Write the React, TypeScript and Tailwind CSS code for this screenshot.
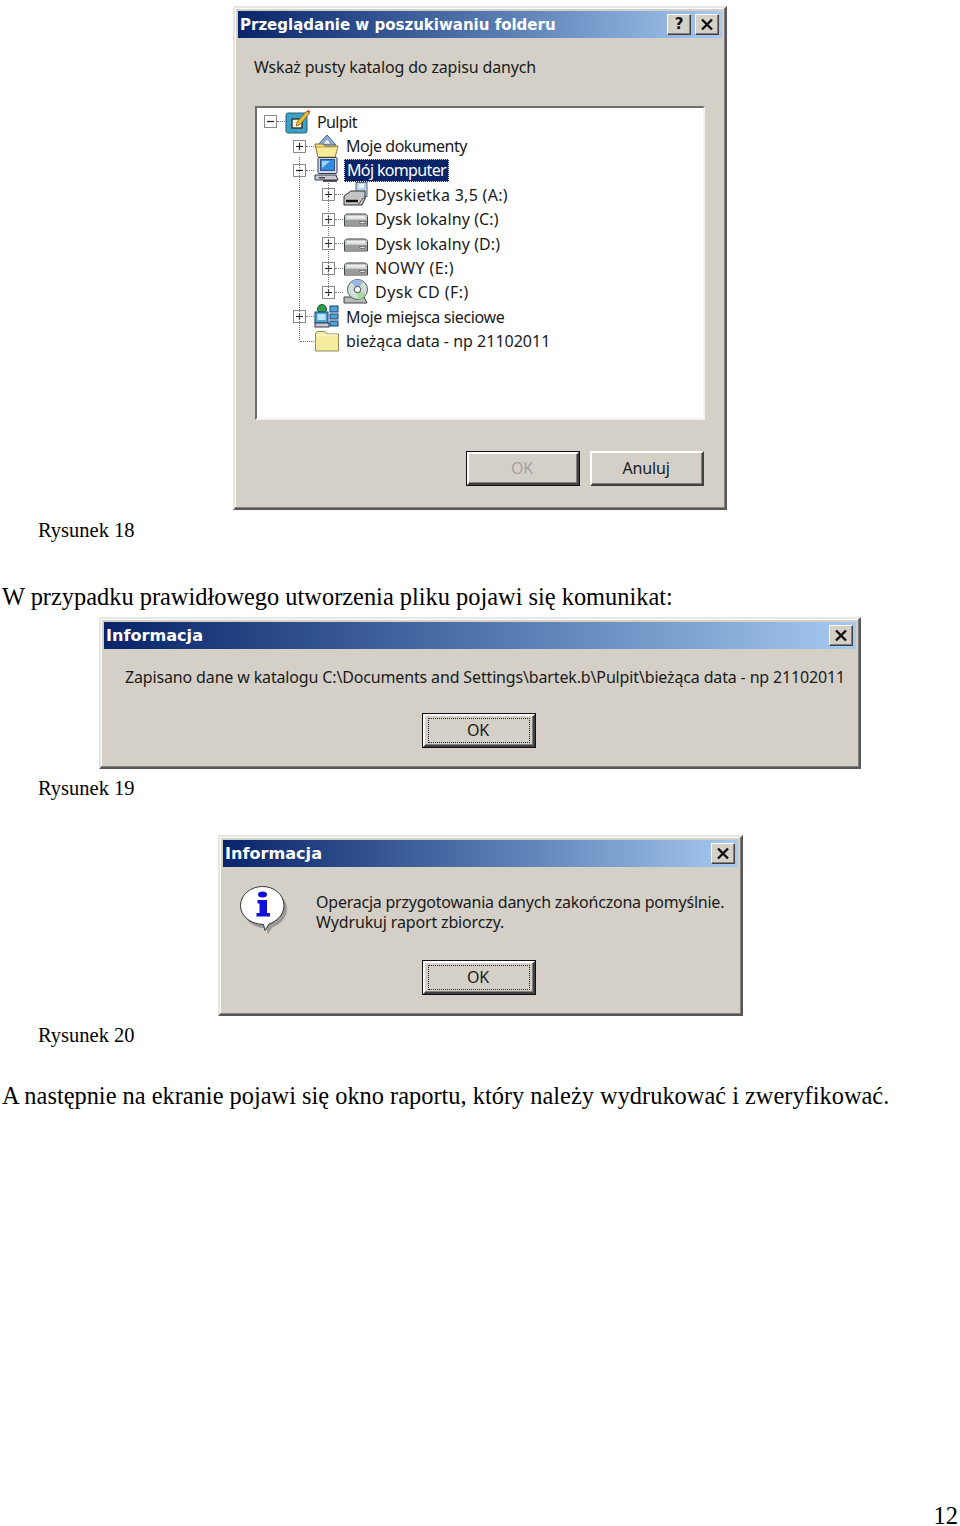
import type { ReactNode } from "react";

const uiBase = "font-['Noto_Sans',sans-serif] text-[16px] text-[#1a1a1a]";
const ui = `${uiBase} tracking-[-0.15px]`;
const serif = "font-['Liberation_Serif',serif] text-black";

function TitleButton({ label }: { label: string }) {
  return (
    <div className="flex h-[21px] w-[24px] items-center justify-center border border-t-white border-l-white border-r-[#404040] border-b-[#404040] bg-[#d4d0c8] shadow-[inset_-1px_-1px_0_#808080]">
      {label === "x" ? (
        <svg width="14" height="13" viewBox="0 0 14 13">
          <path d="M2 1.5 12 11.5M12 1.5 2 11.5" stroke="#111" strokeWidth="2.4" fill="none" />
        </svg>
      ) : (
        <span className="font-['DejaVu_Sans',sans-serif] text-[15px] font-bold leading-none text-[#111]">?</span>
      )}
    </div>
  );
}

function Dialog({ title, help, width, height, children }: { title: string; help?: boolean; width: string; height: string; children: ReactNode }) {
  return (
    <div className={`${width} ${height} flex flex-col border-2 border-t-[#e8e6e1] border-l-[#e8e6e1] border-r-[#585858] border-b-[#585858] bg-[#d4d0c8] p-[3px] shadow-[inset_-1px_-1px_0_#808080,inset_1px_1px_0_#fff]`}>
      <div className="flex h-[27px] shrink-0 items-center justify-between bg-gradient-to-r from-[#0a246a] to-[#a6caf0] pl-[2px] pr-[3px]">
        <span className={`pt-[1px] font-['DejaVu_Sans',sans-serif] font-bold text-white ${help ? "text-[15px]" : "text-[16.1px]"}`}>{title}</span>
        <div className="flex gap-[4px]">
          {help && <TitleButton label="?" />}
          <TitleButton label="x" />
        </div>
      </div>
      {children}
    </div>
  );
}

function WinButton({ label, isDefault, focused, disabled }: { label: string; isDefault?: boolean; focused?: boolean; disabled?: boolean }) {
  const bevel = "flex items-center justify-center border-2 border-t-white border-l-white border-r-[#404040] border-b-[#404040] shadow-[inset_-1px_-1px_0_#808080]";
  const face = (
    <div className={`flex h-[25px] w-[102px] items-center justify-center pb-[2px] pr-[2px] ${focused ? "border border-dotted border-[#222]" : ""}`}>
      <span className={`${ui} ${disabled ? "text-[#a5a29b]" : ""}`}>{label}</span>
    </div>
  );
  if (isDefault) {
    return (
      <div className="flex h-[35px] w-[114px] border border-[#111]">
        <div className={`${bevel} w-full`}>{face}</div>
      </div>
    );
  }
  return <div className={`${bevel} h-[35px] w-[114px]`}>{face}</div>;
}

function Expander({ open }: { open: boolean }) {
  return (
    <svg width="13" height="13" viewBox="0 0 13 13" className="shrink-0">
      <rect x="0.5" y="0.5" width="12" height="12" fill="#fff" stroke="#8a8a8a" />
      <path d={open ? "M3 6.5h7" : "M3 6.5h7M6.5 3v7"} stroke="#222" strokeWidth="1.2" />
    </svg>
  );
}

function DesktopIcon() {
  return (
    <svg width="26" height="26" viewBox="0 0 26 26">
      <rect x="1" y="4" width="21" height="20" rx="2" fill="#3f9fc4" stroke="#25607f" />
      <rect x="7" y="10" width="10" height="9" fill="#f5f1d8" stroke="#333" strokeWidth="1.4" />
      <path d="M12 13 22 2l2.5 2-9 11-4 2z" fill="#f0c030" stroke="#7a5c10" strokeWidth="0.8" />
      <path d="M22 2l2.5 2 1-1.5L23 1z" fill="#d84030" />
    </svg>
  );
}

function DocsIcon() {
  return (
    <svg width="26" height="26" viewBox="0 0 26 26">
      <path d="M4 12 13 2l9 10z" fill="#8fb0d8" stroke="#40608a" />
      <path d="M9 11l4-5 4 5z" fill="#fff" stroke="#6a82a0" strokeWidth="0.7" />
      <path d="M1 11h8l2 2h13l-3 11H4z" fill="#f4dc78" stroke="#8a7430" />
      <path d="M2 14h19l3-1-3 11H4z" fill="#f9ea9a" stroke="#8a7430" strokeWidth="0.6" />
    </svg>
  );
}

function ComputerIcon() {
  return (
    <svg width="26" height="26" viewBox="0 0 26 26">
      <rect x="4" y="0.5" width="19" height="16" rx="1" fill="#d8d8e8" stroke="#333a50" />
      <rect x="6.5" y="2.5" width="14" height="11" fill="#2f8ae0" stroke="#1c3a70" strokeWidth="0.8" />
      <path d="M8 4h8l-8 7z" fill="#9fd4f8" />
      <path d="M1 18h21l2 5H1z" fill="#c8c8d0" stroke="#333a50" />
      <path d="M9 24h14" stroke="#222" strokeWidth="1.5" />
      <rect x="5" y="20" width="6" height="1.5" fill="#444" />
    </svg>
  );
}

function FloppyIcon() {
  return (
    <svg width="26" height="26" viewBox="0 0 26 26">
      <rect x="13" y="0.5" width="11" height="14" fill="#b8d4e4" stroke="#5a6a78" />
      <rect x="16" y="2" width="5" height="4" fill="#eef4f8" />
      <path d="M1 14 8 9h14v8l-3 6H1z" fill="#c4c4c4" stroke="#333" />
      <path d="M3 19h12" stroke="#111" strokeWidth="2.4" />
      <path d="M15 23l5-7h3" fill="none" stroke="#555" />
    </svg>
  );
}

function DriveIcon() {
  return (
    <svg width="26" height="26" viewBox="0 0 26 26">
      <path d="M5 8h16c2 0 3.5 1 3.5 2.5V20H1.500v-9.500C1.500 9 3 8 5 8z" fill="#c8cac8" stroke="#444" />
      <path d="M2 14h22v5.500H2z" fill="#9a9c9c" />
      <rect x="4" y="10" width="18" height="2.500" fill="#eceeee" />
      <rect x="17" y="15.500" width="5" height="2" fill="#e8f0e8" stroke="#333" strokeWidth="0.5" />
    </svg>
  );
}

function CdIcon() {
  return (
    <svg width="26" height="26" viewBox="0 0 26 26">
      <path d="M1 18h20l3 6H1z" fill="#b8bcb8" stroke="#444" />
      <circle cx="14.500" cy="10.500" r="10" fill="#cfe0d8" stroke="#4a5a5a" />
      <path d="M14.500 10.500 8 3a10 10 0 0 1 12-.5z" fill="#9ab8e8" />
      <path d="M14.500 10.500 23 15a10 10 0 0 1-8 5.500z" fill="#a8d8a0" />
      <circle cx="14.500" cy="10.500" r="3.200" fill="#fff" stroke="#444" />
    </svg>
  );
}

function NetworkIcon() {
  return (
    <svg width="26" height="26" viewBox="0 0 26 26">
      <circle cx="8" cy="5" r="4.500" fill="#2f9a50" stroke="#1c5a30" />
      <rect x="1" y="8" width="13" height="11" fill="#4aa8d8" stroke="#1c3a70" />
      <rect x="3.500" y="10" width="8" height="6" fill="#bfe8f8" />
      <rect x="1" y="19" width="14" height="4" fill="#c8c8d0" stroke="#333a50" />
      <rect x="16" y="2" width="8" height="6" fill="#4aa8d8" stroke="#1c3a70" />
      <rect x="16" y="10" width="8" height="5" fill="#4aa8d8" stroke="#1c3a70" />
      <rect x="16" y="17" width="8" height="5" fill="#4aa8d8" stroke="#1c3a70" />
    </svg>
  );
}

function FolderIcon() {
  return (
    <svg width="26" height="26" viewBox="0 0 26 26">
      <path d="M1.500 6 3 3.500h8L13 6h11.500v17H1.500z" fill="#f6ec9e" stroke="#8f8a58" />
      <path d="M2.500 7h21" stroke="#fffbd8" />
    </svg>
  );
}

function InfoIcon() {
  return (
    <svg width="50" height="50" viewBox="0 0 50 50">
      <path d="M25 5c12.500 0 23 8 23 19 0 9-7 16-15 18.500l-4 7-2-6.500C13 43 4 34 4 24 4 13 13 5 25 5z" fill="#9a9a9a" />
      <path d="M23.500 1.500C35 1.500 45 9.500 45 20.500c0 9.500-7.500 16-15 18.500l-4 6.500-1.500-6C11 39 1.500 31 1.500 20.500 1.500 9.500 12 1.500 23.500 1.500z" fill="#fff" stroke="#333" />
      <ellipse cx="23.500" cy="9.500" rx="4.500" ry="3" fill="#1010d8" />
      <path d="M18.500 15h9.500v13h3v3.500H17.500V28h3V18.500h-2z" fill="#1010d8" />
    </svg>
  );
}

type TreeRow = { level: number; open: boolean | null; icon: ReactNode; label: string; track: string; selected?: boolean };

const rows: TreeRow[] = [
  { level: 0, open: true, icon: <DesktopIcon />, label: "Pulpit", track: "tracking-[-0.6px]" },
  { level: 1, open: false, icon: <DocsIcon />, label: "Moje dokumenty", track: "tracking-[-0.45px]" },
  { level: 1, open: true, icon: <ComputerIcon />, label: "Mój komputer", track: "tracking-[-0.65px]", selected: true },
  { level: 2, open: false, icon: <FloppyIcon />, label: "Dyskietka 3,5 (A:)", track: "tracking-[0.3px]" },
  { level: 2, open: false, icon: <DriveIcon />, label: "Dysk lokalny (C:)", track: "tracking-[0.1px]" },
  { level: 2, open: false, icon: <DriveIcon />, label: "Dysk lokalny (D:)", track: "tracking-[0.1px]" },
  { level: 2, open: false, icon: <DriveIcon />, label: "NOWY (E:)", track: "tracking-[0.4px]" },
  { level: 2, open: false, icon: <CdIcon />, label: "Dysk CD (F:)", track: "tracking-[0.45px]" },
  { level: 1, open: false, icon: <NetworkIcon />, label: "Moje miejsca sieciowe", track: "tracking-[-0.35px]" },
  { level: 1, open: null, icon: <FolderIcon />, label: "bieżąca data - np 21102011", track: "tracking-normal" },
];

const indent = ["ml-0", "ml-[29px]", "ml-[58px]"];

function Tree() {
  return (
    <div className="relative ml-[17px] mr-[17px] mt-[26px] h-[314px] border-2 border-t-[#6e6e6a] border-l-[#6e6e6a] border-r-[#f4f3f0] border-b-[#f4f3f0] bg-white pl-[7px] pt-[1.5px]">
      <div className="absolute left-[42px] top-[49px] h-[183px] border-l border-dotted border-[#777]" />
      <div className="absolute left-[71px] top-[75px] h-[111px] border-l border-dotted border-[#777]" />
      {rows.map((r) => (
        <div key={r.label} className={`flex h-[24.4px] items-center ${indent[r.level]}`}>
          {r.open === null ? (
            <div className="w-[13px] shrink-0" />
          ) : (
            <Expander open={r.open} />
          )}
          <div className={`h-0 shrink-0 border-t border-dotted border-[#777] ${r.open === null ? "ml-[-6px] w-[14px]" : "w-[8px]"}`} />
          <div className="h-[26px] w-[26px] shrink-0">{r.icon}</div>
          <span className={`ml-[4px] flex h-[23px] items-center whitespace-nowrap px-[2px] ${uiBase} ${r.track} ${r.selected ? "border border-dotted border-[#ddd] bg-[#0a246a] text-white" : ""}`}>
            {r.label}
          </span>
        </div>
      ))}
    </div>
  );
}

export default function App() {
  return (
    <div className="flex h-[1526px] w-[960px] flex-col bg-white pt-[6px]">
      <div className="ml-[233px]">
        <Dialog title="Przeglądanie w poszukiwaniu folderu" help width="w-[494px]" height="h-[504px]">
          <p className={`ml-[16px] mt-[17px] h-[25px] leading-[25px] ${ui}`}>Wskaż pusty katalog do zapisu danych</p>
          <Tree />
          <div className="mt-[31px] flex justify-end gap-[10px] pr-[18px]">
            <WinButton label="OK" isDefault disabled />
            <WinButton label="Anuluj" />
          </div>
        </Dialog>
      </div>

      <p className={`ml-[38px] mt-[8px] h-[24px] text-[20.5px] leading-[24px] ${serif}`}>Rysunek 18</p>
      <p className={`ml-[2px] mt-[41px] h-[28px] text-[24.4px] leading-[28px] ${serif}`}>W przypadku prawidłowego utworzenia pliku pojawi się komunikat:</p>

      <div className="ml-[99px] mt-[6px]">
        <Dialog title="Informacja" width="w-[762px]" height="h-[152px]">
          <p className={`ml-[21px] mt-[16px] h-[25px] whitespace-nowrap leading-[25px] ${ui}`}>Zapisano dane w katalogu C:\Documents and Settings\bartek.b\Pulpit\bieżąca data - np 21102011</p>
          <div className="ml-[318px] mt-[23px] flex">
            <WinButton label="OK" isDefault focused />
          </div>
        </Dialog>
      </div>

      <p className={`ml-[38px] mt-[7px] h-[24px] text-[20.5px] leading-[24px] ${serif}`}>Rysunek 19</p>

      <div className="ml-[218px] mt-[35px]">
        <Dialog title="Informacja" width="w-[525px]" height="h-[181px]">
          <div className="flex pl-[16px] pt-[18px]">
            <InfoIcon />
            <div className={`ml-[27px] whitespace-nowrap pt-[7px] leading-[20px] ${ui}`}>
              <p className="tracking-[-0.23px]">Operacja przygotowania danych zakończona pomyślnie.</p>
              <p>Wydrukuj raport zbiorczy.</p>
            </div>
          </div>
          <div className="ml-[199px] mt-[25px] flex">
            <WinButton label="OK" isDefault focused />
          </div>
        </Dialog>
      </div>

      <p className={`ml-[38px] mt-[7px] h-[24px] text-[20.5px] leading-[24px] ${serif}`}>Rysunek 20</p>
      <p className={`ml-[2px] mt-[35px] h-[28px] text-[24.4px] leading-[28px] ${serif}`}>A następnie na ekranie pojawi się okno raportu, który należy wydrukować i zweryfikować.</p>

      <p className={`mt-auto self-end pr-[2px] text-[24.4px] leading-[20px] ${serif}`}>12</p>
    </div>
  );
}
